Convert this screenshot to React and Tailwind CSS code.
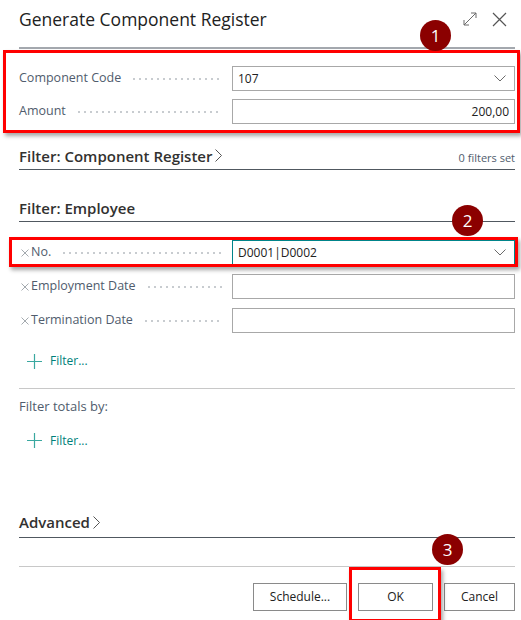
import React from 'react';

const font = { fontFamily: '"Segoe UI", "Open Sans", "Noto Sans", sans-serif' };

const Badge = ({ n, className }) => (
  <div
    className={`absolute w-[31px] h-[31px] rounded-full bg-[#8b0000] text-white text-[17px] flex items-center justify-center ${className}`}
  >
    {n}
  </div>
);

const Dots = () => (
  <div className="flex-1 mx-[10px] h-[2px] bg-[radial-gradient(circle,#c8ccd0_0.8px,transparent_1px)] bg-[length:6px_2px] bg-repeat-x" />
);

const ChevronDown = () => (
  <svg width="12" height="7" viewBox="0 0 12 7" className="shrink-0">
    <path d="M0.5 0.5 L6 6 L11.5 0.5" fill="none" stroke="#6b6b6b" strokeWidth="1" />
  </svg>
);

const ChevronRight = () => (
  <svg width="7" height="13" viewBox="0 0 7 13" className="ml-[3px]">
    <path d="M0.5 0.5 L6.5 6.5 L0.5 12.5" fill="none" stroke="#555" strokeWidth="1" />
  </svg>
);

const Plus = () => (
  <svg width="15" height="15" viewBox="0 0 15 15">
    <path d="M7.5 0 V15 M0 7.5 H15" stroke="#3aa8a0" strokeWidth="1.2" />
  </svg>
);

const Remove = () => (
  <svg width="8" height="8" viewBox="0 0 8 8" className="mx-[2px] shrink-0">
    <path d="M0.5 0.5 L7.5 7.5 M7.5 0.5 L0.5 7.5" stroke="#9aa0a6" strokeWidth="0.9" />
  </svg>
);

const Field = ({ label, removable, value, align = 'left', dropdown, focused }) => (
  <div className="flex items-center h-[25px]">
    <div className="w-[213px] flex items-center text-[12.5px] text-[#505c6d]">
      {removable && <Remove />}
      <span className="whitespace-nowrap">{label}</span>
      <Dots />
    </div>
    <div
      className={`flex-1 h-[25px] flex items-center px-[5px] bg-white border ${
        focused ? 'border-[#00848a]' : 'border-[#a8a8a8]'
      }`}
    >
      <span className={`flex-1 text-[12px] text-[#212121] ${align === 'right' ? 'text-right' : ''}`}>{value}</span>
      {dropdown && <span className="mr-[3px]"><ChevronDown /></span>}
    </div>
  </div>
);

const AddFilter = () => (
  <div className="flex items-center pl-[8px] h-[20px]">
    <Plus />
    <span className="ml-[8px] text-[12px] text-[#00807a]">Filter...</span>
  </div>
);

const Button = ({ children, className }) => (
  <button
    className={`h-[28px] border border-[#8a8a8a] bg-white text-[12px] text-[#212121] flex items-center justify-center ${className}`}
  >
    {children}
  </button>
);

export default function App() {
  return (
    <div className="w-[521px] h-[620px] bg-white overflow-hidden relative" style={font}>
      <div className="pl-[19px] pr-[6px]">
        {/* header */}
        <div className="flex items-center h-[38px]">
          <h1 className="flex-1 text-[17.5px] text-[#212121] font-normal">Generate Component Register</h1>
          <svg width="14" height="14" viewBox="0 0 14 14" className="mr-[15px]">
            <path d="M1 13 L13 1 M8 1 H13 V6 M1 8 V13 H6" fill="none" stroke="#6b6b6b" strokeWidth="1" />
          </svg>
          <svg width="15" height="15" viewBox="0 0 15 15" className="mr-[8px]">
            <path d="M1 1 L14 14 M14 1 L1 14" fill="none" stroke="#555" strokeWidth="1.2" />
          </svg>
        </div>
        <div className="h-[2px] bg-[#a4a8ae] mt-[9px]" />

        {/* annotated block 1 */}
        <div className="relative mt-[17px] flex flex-col gap-[8px]">
          <div className="absolute left-[-16px] right-[-5px] top-[-16px] bottom-[-9px] border-[3px] border-[#ff0000] shadow-[2px_3px_4px_rgba(0,0,0,0.35)] pointer-events-none" />
          <Field label="Component Code" value="107" dropdown />
          <Field label="Amount" value="200,00" align="right" />
        </div>

        {/* filter component register */}
        <div className="mt-[22px] flex items-end h-[24px] border-b border-[#505860] pb-[2px]">
          <span className="text-[15px] font-semibold text-[#323130] flex items-center">
            Filter: Component Register
            <ChevronRight />
          </span>
          <span className="ml-auto text-[11px] text-[#505c6d] mb-[1px]">0 filters set</span>
        </div>

        {/* filter employee */}
        <div className="mt-[28px] flex items-end h-[24px] border-b border-[#505860] pb-[2px]">
          <span className="text-[15px] font-semibold text-[#323130]">Filter: Employee</span>
        </div>

        <div className="relative mt-[18px]">
          <div className="absolute left-[-10px] right-[-3px] top-[-3px] bottom-[-2px] border-[3px] border-[#ff0000] shadow-[2px_3px_4px_rgba(0,0,0,0.35)] pointer-events-none" />
          <Field label="No." removable value="D0001|D0002" dropdown focused />
        </div>
        <div className="mt-[9px] flex flex-col gap-[9px]">
          <Field label="Employment Date" removable value="" />
          <Field label="Termination Date" removable value="" />
        </div>

        <div className="mt-[18px]">
          <AddFilter />
        </div>

        <div className="mt-[17px] h-px bg-[#c8c8c8]" />
        <div className="mt-[8px] text-[13px] text-[#505c6d]">Filter totals by:</div>
        <div className="mt-[14px]">
          <AddFilter />
        </div>

        {/* advanced */}
        <div className="mt-[63px] flex items-end h-[24px] border-b border-[#505860] pb-[3px]">
          <span className="text-[15px] font-semibold text-[#323130] flex items-center">
            Advanced
            <ChevronRight />
          </span>
        </div>

        <div className="mt-[28px] h-px bg-[#c8c8c8]" />

        {/* footer buttons */}
        <div className="mt-[16px] flex justify-end gap-[11px]">
          <Button className="w-[94px]">Schedule...</Button>
          <div className="relative">
            <div className="absolute left-[-9px] right-[-8px] top-[-16px] bottom-[-11px] border-[3px] border-[#ff0000] shadow-[2px_3px_4px_rgba(0,0,0,0.35)] pointer-events-none" />
            <Button className="w-[75px]">OK</Button>
          </div>
          <Button className="w-[71px]">Cancel</Button>
        </div>
      </div>

      <Badge n="1" className="left-[420px] top-[20px]" />
      <Badge n="2" className="left-[452px] top-[205px]" />
      <Badge n="3" className="left-[432px] top-[534px]" />
    </div>
  );
}
